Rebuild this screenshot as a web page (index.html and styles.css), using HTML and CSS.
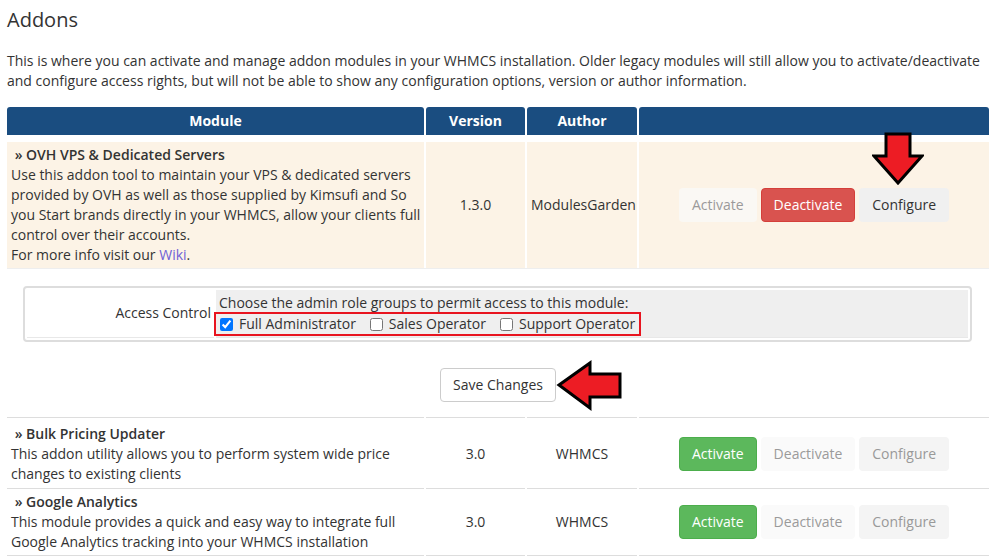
FILE: index.html
```html
<!DOCTYPE html>
<html lang="en">
<head>
    <meta charset="UTF-8">
    <title>Addons</title>
    <link rel="stylesheet" href="styles.css">
</head>
<body>
    <div class="page">
        <h1>Addons</h1>
        <p class="intro">This is where you can activate and manage addon modules in your WHMCS installation. Older legacy modules will still allow you to activate/deactivate and configure access rights, but will not be able to show any configuration options, version or author information.</p>

        <table class="datatable">
            <thead>
                <tr>
                    <th class="col-module">Module</th>
                    <th class="col-version">Version</th>
                    <th class="col-author">Author</th>
                    <th class="col-actions"></th>
                </tr>
            </thead>
            <tbody>
                <tr class="active-row">
                    <td class="module">
                        <b>&nbsp;» OVH VPS &amp; Dedicated Servers</b><br>
                        Use this addon tool to maintain your VPS &amp; dedicated servers provided by OVH as well as those supplied by Kimsufi and So you Start brands directly in your WHMCS, allow your clients full control over their accounts.<br>
                        For more info visit our <a href="#">Wiki</a>.
                    </td>
                    <td class="center">1.3.0</td>
                    <td class="center">ModulesGarden</td>
                    <td class="center">
                        <div class="actions">
                            <button class="btn btn-off">Activate</button>
                            <button class="btn btn-danger">Deactivate</button>
                            <button class="btn btn-default">Configure</button>
                        </div>
                    </td>
                </tr>
                <tr class="config-row">
                    <td colspan="4">
                        <table class="form">
                            <tr>
                                <td class="fieldlabel">Access Control</td>
                                <td class="fieldarea">
                                    Choose the admin role groups to permit access to this module:<br>
                                    <span class="roles">
                                        <label><input type="checkbox" checked> Full Administrator</label>
                                        <label><input type="checkbox"> Sales Operator</label>
                                        <label><input type="checkbox"> Support Operator</label>
                                    </span>
                                </td>
                            </tr>
                        </table>
                        <div class="save">
                            <button class="btn btn-save">Save Changes</button>
                        </div>
                    </td>
                </tr>
                <tr class="first">
                    <td class="module">
                        <b>&nbsp;» Bulk Pricing Updater</b><br>
                        This addon utility allows you to perform system wide price changes to existing clients
                    </td>
                    <td class="center">3.0</td>
                    <td class="center">WHMCS</td>
                    <td class="center">
                        <div class="actions">
                            <button class="btn btn-success">Activate</button>
                            <button class="btn btn-off">Deactivate</button>
                            <button class="btn btn-muted">Configure</button>
                        </div>
                    </td>
                </tr>
                <tr class="last">
                    <td class="module">
                        <b>&nbsp;» Google Analytics</b><br>
                        This module provides a quick and easy way to integrate full Google Analytics tracking into your WHMCS installation
                    </td>
                    <td class="center">3.0</td>
                    <td class="center">WHMCS</td>
                    <td class="center">
                        <div class="actions">
                            <button class="btn btn-success">Activate</button>
                            <button class="btn btn-off">Deactivate</button>
                            <button class="btn btn-muted">Configure</button>
                        </div>
                    </td>
                </tr>
            </tbody>
        </table>

        <!-- annotation arrows -->
        <svg class="arrow arrow-down" width="52" height="54" viewBox="0 0 52 54">
            <polygon points="14,2 38,2 38,24 50,24 26,51 2,24 14,24" />
        </svg>
        <svg class="arrow arrow-left" width="68" height="52" viewBox="0 0 68 52">
            <polygon points="3,25 34,3 34,14 64,14 64,37 34,37 34,48" />
        </svg>
    </div>
</body>
</html>
```

FILE: styles.css
```css
body {
    margin: 0;
    padding: 0;
    background: #ffffff;
    color: #333333;
    font-family: 'Open Sans', sans-serif;
    font-size: 14px;
    line-height: 20px;
}

.page {
    position: relative;
    padding: 0 9px 0 7px;
}

h1 {
    margin: 0;
    padding-top: 9px;
    font-size: 20px;
    font-weight: 400;
    line-height: 22px;
    color: #333333;
}

.intro {
    margin: 20px 0 16px;
}

.datatable {
    width: 986px;
    table-layout: fixed;
    border-collapse: separate;
    border-spacing: 2px 0;
    margin: 0 0 0 -2px;
}

.datatable th {
    height: 20px;
    padding: 4px;
    background: #1a4d80;
    background-clip: padding-box;
    color: #ffffff;
    font-weight: bold;
    text-align: center;
    border-radius: 3px;
    border-bottom: 7px solid #ffffff;
}

.col-module { width: 409px; }
.col-version { width: 91px; }
.col-author { width: 102px; }

.datatable td {
    padding: 3px 4px;
    border-top: 1px solid #dddddd;
    vertical-align: middle;
}

.datatable td.module {
    padding-right: 2px;
}

.datatable tr.first td {
    padding-top: 6px;
    padding-bottom: 4px;
}

.datatable tr.last td {
    border-bottom: 1px solid #dddddd;
}

.active-row td {
    background: #fcf3e6;
    border-top-color: #fcf3e6;
}

.datatable .active-row td {
    padding-top: 2px;
    padding-bottom: 3px;
}

.center {
    text-align: center;
}

.module b {
    font-weight: 600;
}

.module a {
    color: #6f5fd6;
    text-decoration: none;
}

.actions {
    display: flex;
    justify-content: center;
    gap: 4px;
}

.btn {
    height: 34px;
    padding: 6px 12px;
    font-family: 'Open Sans', sans-serif;
    font-size: 14px;
    line-height: 20px;
    border: 1px solid transparent;
    border-radius: 4px;
    cursor: pointer;
}

.btn-off {
    background: #faf8f4;
    color: #9a9a9a;
}

.datatable tr:not(.active-row) .btn-off {
    background: #fafafa;
}

.btn-danger {
    background: #d9534f;
    border-color: #d43f3a;
    color: #ffffff;
}

.btn-default {
    background: #f0f0f0;
    color: #333333;
}

.btn-success {
    background: #5cb85c;
    border-color: #4cae4c;
    color: #ffffff;
}

.btn-muted {
    background: #f4f4f4;
    color: #999999;
}

.btn-save {
    background: #ffffff;
    border-color: #cccccc;
    color: #333333;
}

.datatable .config-row > td {
    padding: 17px 0 15px;
    border-top: 1px solid #eeeeee;
}

.form {
    width: 949px;
    margin: 0 0 0 16px;
    border: 2px solid #dddddd;
    border-radius: 4px;
    border-spacing: 2px;
}

.datatable .form td {
    padding: 3px 3px 4px;
    border-top: none;
    border-bottom: 1px solid #e8e8e8;
}

.fieldlabel {
    width: 181px;
    text-align: right;
    background: #ffffff;
}

.fieldarea {
    background: #efefef;
}

.roles {
    display: inline-flex;
    align-items: center;
    gap: 14px;
    height: 20px;
    margin: -1px 0 -3px -5px;
    padding: 0 4px 0 4px;
    border: 2px solid #e8141f;
    vertical-align: top;
}

.roles label {
    display: flex;
    align-items: center;
}

.roles input {
    width: 13px;
    height: 13px;
    margin: 0 6px 0 0;
}

.save {
    text-align: center;
    margin-top: 26px;
}

.arrow {
    position: absolute;
    z-index: 2;
}

.arrow polygon {
    fill: #ed1c24;
    stroke: #000000;
    stroke-width: 3;
    stroke-linejoin: miter;
}

.arrow-down {
    left: 872px;
    top: 132px;
}

.arrow-left {
    left: 556px;
    top: 360px;
}
```
